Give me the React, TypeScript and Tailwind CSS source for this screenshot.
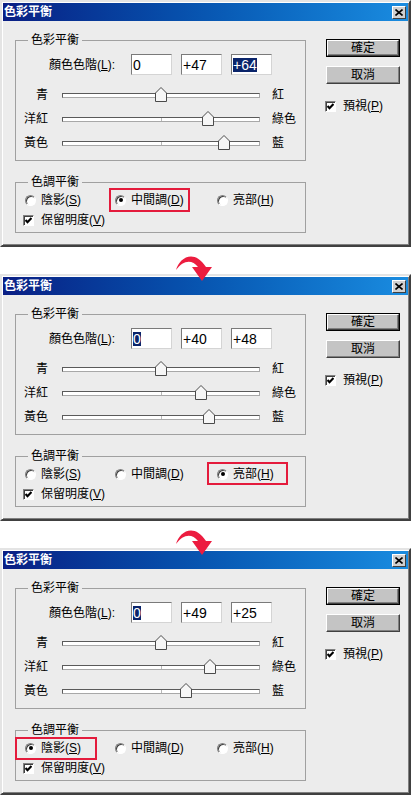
import React from "react";

const FONT = "font-['Liberation_Sans','Noto_Sans_CJK_TC',sans-serif]";

const sliderLabels: [string, string][] = [
  ["青", "紅"],
  ["洋紅", "綠色"],
  ["黃色", "藍"],
];

function fmt(v: number) {
  return v > 0 ? "+" + v : String(v);
}

function Radio({ on }: { on: boolean }) {
  return (
    <span className="flex h-[11px] w-[11px] items-center justify-center rounded-full border border-t-[#808080] border-l-[#808080] border-b-white border-r-white bg-white shadow-[inset_1px_1px_0_#404040]">
      {on && <span className="h-[4px] w-[4px] rounded-full bg-black" />}
    </span>
  );
}

function CheckBox() {
  return (
    <span className="flex h-[11px] w-[11px] items-center justify-center border border-t-[#808080] border-l-[#808080] border-b-white border-r-white bg-white shadow-[inset_1px_1px_0_#404040]">
      <svg width="7" height="7" viewBox="0 0 7 7">
        <path d="M0.5 3 L2.5 5.2 L6.5 1" stroke="black" strokeWidth="2.2" fill="none" />
      </svg>
    </span>
  );
}

function Button({ label, primary }: { label: string; primary?: boolean }) {
  return (
    <div className={primary ? "h-[18px] w-[74px] border border-black" : "h-[18px] w-[74px]"}>
      <div className="flex h-full items-center justify-center border border-t-white border-l-white border-r-[#404040] border-b-[#404040] bg-[#c4c4c4] shadow-[inset_-1px_-1px_0_#808080]">
        {label}
      </div>
    </div>
  );
}

function Slider({ value }: { value: number }) {
  // thumb center on the 198px track, minus half the thumb and the track border
  const left = (198 * (value + 100)) / 200 - 6 - 1;
  return (
    <div className="relative h-[5px] w-[198px] border border-[#5a5a5a] border-b-[#a8a8a8] border-r-[#a8a8a8] bg-white">
      <span className="absolute left-[98px] top-0 h-full w-px bg-[#b8b8b8]" />
      <svg className="absolute top-[-7px]" style={{ left }} width="12" height="15" viewBox="0 0 12 15">
        <path d="M0.5 6 L6 0.5 L11.5 6 L11.5 14.5 L0.5 14.5 Z" fill="#f6f6f6" stroke="#4a4a4a" />
      </svg>
    </div>
  );
}

interface DialogProps {
  levels: [number, number, number];
  tone: 0 | 1 | 2;
  activeInput: 0 | 2;
  markClass: string;
}

function ColorBalanceDialog({ levels, tone, activeInput, markClass }: DialogProps) {
  const tones = [
    { t: "陰影(", k: "S", w: "w-[90px]" },
    { t: "中間調(", k: "D", w: "w-[102px]" },
    { t: "亮部(", k: "H", w: "" },
  ];

  return (
    <div className="relative h-[247px] w-[411px] border-2 border-t-[#e4e4e4] border-l-[#e4e4e4] border-r-[#404040] border-b-[#404040] bg-[#ececec] p-px shadow-[inset_1px_1px_0_#fff,inset_-1px_-1px_0_#808080]">
      {/* title bar */}
      <div className="flex h-[18px] items-center justify-between bg-linear-to-r from-[#0a1e84] to-[#1a8ce0] pl-px pr-[2px]">
        <span className="text-[12px] font-bold text-white">色彩平衡</span>
        <div className="flex h-[13px] w-[14px] items-center justify-center border border-t-white border-l-white border-r-[#404040] border-b-[#404040] bg-[#d0d0d0]">
          <svg width="8" height="7" viewBox="0 0 8 7">
            <path d="M0.5 0.5 L7.5 6.5 M7.5 0.5 L0.5 6.5" stroke="black" strokeWidth="1.6" />
          </svg>
        </div>
      </div>

      <div className="flex pl-[12px]">
        <div className="flex w-[291px] flex-col">
          <fieldset className="mt-[12px] h-[128px] border border-[#a0a0a0]">
            <legend className="ml-[12px] px-[3px] leading-[14px]">色彩平衡</legend>
            <div className="mt-[7px] flex h-[21px] items-center pl-[33px]">
              <span className="w-[82px]">
                顏色色階(<span className="underline">L</span>):
              </span>
              <div className="flex gap-[9px]">
                {levels.map((v, i) => (
                  <div
                    key={i}
                    className="flex h-[21px] w-[41px] items-center border border-[#7a7a7a] border-b-[#d4d4d4] border-r-[#d4d4d4] bg-white pl-px text-[14px] leading-none"
                  >
                    {i === activeInput ? (
                      <span className="bg-[#0a246a] text-white">{fmt(v)}</span>
                    ) : (
                      <span>{fmt(v)}</span>
                    )}
                  </div>
                ))}
              </div>
            </div>
            <div className="mt-[8px] flex flex-col">
              {sliderLabels.map(([a, b], i) => (
                <div key={a} className="flex h-6 items-center">
                  <span className="w-[32px] text-right">{a}</span>
                  <div className="ml-[14px]">
                    <Slider value={levels[i]} />
                  </div>
                  <span className="ml-[12px]">{b}</span>
                </div>
              ))}
            </div>
          </fieldset>

          <fieldset className="mt-[14px] h-[58px] border border-[#a0a0a0]">
            <legend className="ml-[12px] px-[3px] leading-[14px]">色調平衡</legend>
            <div className="mt-[3px] flex h-[16px] items-center pl-[9px]">
              {tones.map((o, i) => (
                <div key={o.k} className={`flex items-center gap-[5px] ${o.w}`}>
                  <Radio on={tone === i} />
                  <span>
                    {o.t}
                    <span className="underline">{o.k}</span>)
                  </span>
                </div>
              ))}
            </div>
            <div className="mt-[4px] flex h-[16px] items-center gap-[7px] pl-[7px]">
              <CheckBox />
              <span>
                保留明度(<span className="underline">V</span>)
              </span>
            </div>
          </fieldset>
        </div>

        <div className="ml-[20px] flex w-[74px] flex-col">
          <div className="mt-[18px]">
            <Button label="確定" primary />
          </div>
          <div className="mt-[9px]">
            <Button label="取消" />
          </div>
          <div className="ml-[-1px] mt-[15px] flex h-[14px] items-center gap-[7px]">
            <CheckBox />
            <span>
              預視(<span className="underline">P</span>)
            </span>
          </div>
        </div>
      </div>

      <div className={`absolute border-2 border-[#e41b3c] ${markClass}`} />
    </div>
  );
}

function ArrowGap() {
  return (
    <div className="relative z-10 h-[27px]">
      <svg className="absolute left-[172px] top-[3px]" width="44" height="36" viewBox="0 0 44 36">
        <path
          d="M4 20 C 7 8, 22 -2, 34 17 L 40 17 L 30 31 L 20 17 L 26 17 C 20 9, 11 10, 4 20 Z"
          fill="#ec1c3f"
        />
      </svg>
    </div>
  );
}

export default function App() {
  return (
    <div className={`min-h-[798px] w-[413px] bg-white text-[12px] text-black ${FONT}`}>
      <ColorBalanceDialog
        levels={[0, 47, 64]}
        tone={1}
        activeInput={2}
        markClass="left-[107px] top-[186px] h-[24px] w-[81px]"
      />
      <ArrowGap />
      <ColorBalanceDialog
        levels={[0, 40, 48]}
        tone={2}
        activeInput={0}
        markClass="left-[205px] top-[186px] h-[23px] w-[81px]"
      />
      <ArrowGap />
      <ColorBalanceDialog
        levels={[0, 49, 25]}
        tone={0}
        activeInput={0}
        markClass="left-[13px] top-[187px] h-[23px] w-[82px]"
      />
    </div>
  );
}
